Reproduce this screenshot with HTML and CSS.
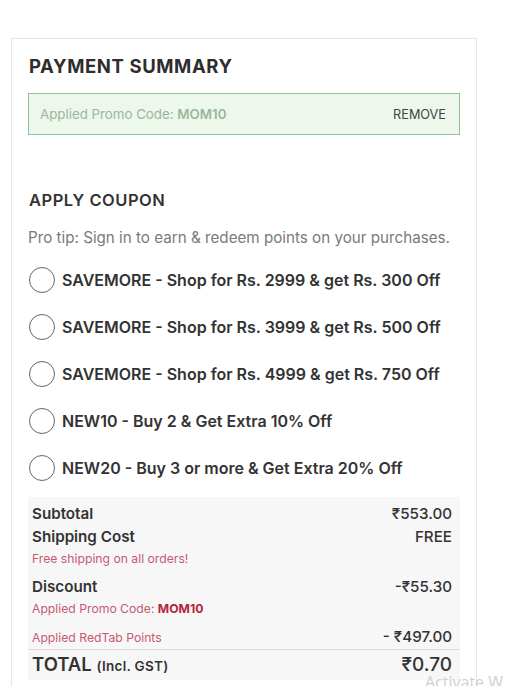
FILE: index.html
```html
<!DOCTYPE html>
<html lang="en">
    <head>
        <meta charset="UTF-8" />
        <title>Payment Summary</title>
        <link rel="stylesheet" href="styles.css">
    </head>
    <body>
        <div class="karta">
            <h1>PAYMENT SUMMARY</h1>

            <div class="promo">
                <span class="promo-text">Applied Promo Code: <b>MOM10</b></span>
                <span class="odebrat">REMOVE</span>
            </div>

            <h2>APPLY COUPON</h2>
            <p class="tip">Pro tip: Sign in to earn &amp; redeem points on your purchases.</p>

            <ul class="kupony">
                <li><span class="kolecko"></span>SAVEMORE - Shop for Rs. 2999 &amp; get Rs. 300 Off</li>
                <li><span class="kolecko"></span>SAVEMORE - Shop for Rs. 3999 &amp; get Rs. 500 Off</li>
                <li><span class="kolecko"></span>SAVEMORE - Shop for Rs. 4999 &amp; get Rs. 750 Off</li>
                <li><span class="kolecko"></span>NEW10 - Buy 2 &amp; Get Extra 10% Off</li>
                <li><span class="kolecko"></span>NEW20 - Buy 3 or more &amp; Get Extra 20% Off</li>
            </ul>

            <div class="souhrn">
                <div class="radek">
                    <span>Subtotal</span>
                    <span>₹553.00</span>
                </div>
                <div class="radek">
                    <span>Shipping Cost</span>
                    <span>FREE</span>
                </div>
                <p class="poznamka">Free shipping on all orders!</p>

                <div class="radek sleva">
                    <span>Discount</span>
                    <span>-₹55.30</span>
                </div>
                <p class="poznamka">Applied Promo Code: <b>MOM10</b></p>

                <div class="radek body">
                    <span class="poznamka">Applied RedTab Points</span>
                    <span>- ₹497.00</span>
                </div>

                <div class="radek celkem">
                    <span>TOTAL <small>(Incl. GST)</small></span>
                    <span>₹0.70</span>
                </div>
            </div>
        </div>

        <div class="vodoznak">Activate W</div>
    </body>
</html>
```

FILE: styles.css
```css
body {
    margin: 0;
    padding: 38px 0 0 11px;
    font-family: Inter, "Open Sans", sans-serif;
    color: #333;
    background-color: #fff;
    overflow: hidden;
}

.karta {
    width: 432px;
    border: 1px solid #e6e6e6;
    border-bottom: none;
    padding: 15px 16px 20px;
}

h1 {
    margin: 0 0 15px 1px;
    font-size: 18.5px;
    line-height: 24px;
    font-weight: 700;
    letter-spacing: 0.6px;
    color: #2e2e2e;
}

.promo {
    display: flex;
    justify-content: space-between;
    align-items: center;
    height: 40px;
    padding: 0 13px 0 11px;
    background-color: #eef7ec;
    border: 1px solid #8cc49a;
}

.promo-text {
    font-size: 13.3px;
    color: #98b79d;
}

.promo-text b {
    font-weight: 600;
}

.odebrat {
    font-size: 12.7px;
    color: #444;
}

h2 {
    margin: 55px 0 0 1px;
    font-size: 16.5px;
    line-height: 20px;
    font-weight: 600;
    letter-spacing: 0.5px;
    color: #333;
}

.tip {
    margin: 18px 0 0 0;
    font-size: 15.2px;
    line-height: 20px;
    color: #7a7a7a;
}

.kupony {
    list-style: none;
    margin: 8px 0 0;
    padding: 0;
}

.kupony li {
    display: flex;
    align-items: center;
    height: 47px;
    font-size: 16px;
    font-weight: 600;
    color: #333;
}

.kolecko {
    width: 24px;
    height: 24px;
    margin: 0 7px 0 1px;
    border: 1px solid #666;
    border-radius: 50%;
    flex: none;
}

.souhrn {
    margin-top: 6px;
    padding: 5px 8px 0 4px;
    background-color: #f7f7f7;
}

.radek {
    display: flex;
    justify-content: space-between;
    align-items: baseline;
    font-size: 15.2px;
    line-height: 23px;
    font-weight: 600;
    color: #333;
}

.radek span + span {
    font-weight: 500;
}

.poznamka {
    margin: 1px 0 0;
    font-size: 12.2px;
    line-height: 20px;
    font-weight: 400;
    color: #c65a72;
}

.poznamka b {
    font-weight: 700;
    color: #b5233f;
}

.sleva {
    margin-top: 6px;
}

.body {
    margin: 6px -8px 0 -4px;
    padding: 0 8px 1px 4px;
    border-bottom: 1px solid #dcdcdc;
}

.body .poznamka {
    margin: 0;
}

.celkem {
    font-size: 19px;
    line-height: 28px;
}

.celkem > span:first-child {
    font-size: 18.5px;
}

.celkem small {
    font-size: 13.5px;
    letter-spacing: 0.3px;
}

.vodoznak {
    position: absolute;
    left: 425px;
    top: 671px;
    font-family: "Open Sans", sans-serif;
    font-size: 16px;
    color: #cfcfcf;
}
```
